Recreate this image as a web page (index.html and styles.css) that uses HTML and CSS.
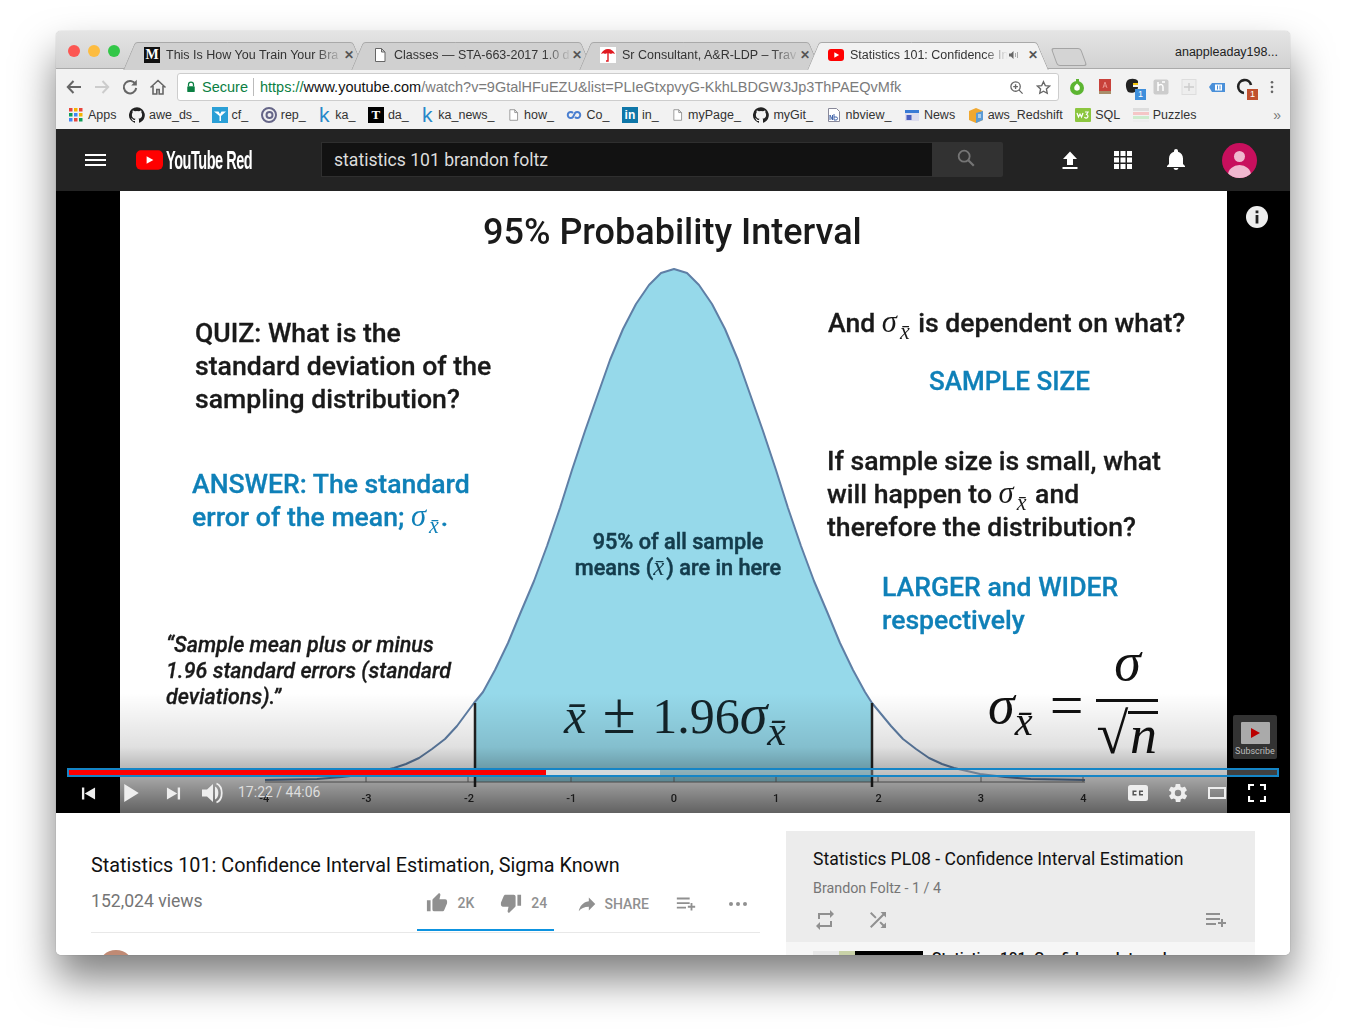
FILE: index.html
```html
<!DOCTYPE html>
<html lang="en">
  <head>
    <meta charset="UTF-8" />
    <meta name="viewport" content="width=device-width, initial-scale=1.0" />
    <title>Statistics 101: Confidence Interval Estimation, Sigma Known</title>
    <link rel="stylesheet" href="styles.css">
  </head>
  <body>
    <div class="window">
      <!-- browser tabs -->
      <div class="tabstrip">
        <div class="lights"><i class="red"></i><i class="yellow"></i><i class="green"></i></div>
        <div class="tabs">
          <div class="tab">
            <span class="fav fav-m">M</span>
            <span class="tab-title">This Is How You Train Your Bra</span>
            <span class="tab-x">✕</span>
          </div>
          <div class="tab">
            <svg class="fav" viewBox="0 0 16 16"><path d="M3.5 1.5h6l3.5 3.5v9.5h-9.5zM9.5 1.5v3.5h3.5" fill="#fff" stroke="#666"/></svg>
            <span class="tab-title">Classes — STA-663-2017 1.0 d</span>
            <span class="tab-x">✕</span>
          </div>
          <div class="tab">
            <svg class="fav" viewBox="0 0 16 16"><rect width="16" height="16" fill="#fff"/><path d="M1 7c1-3 4-5 7-5s6 2 7 5c-2-1-3-1-4 0-1-1-5-1-6 0-1-1-2-1-4 0z" fill="#e01b22"/><path d="M8 6v8H6" fill="none" stroke="#e01b22" stroke-width="1.4"/></svg>
            <span class="tab-title">Sr Consultant, A&amp;R-LDP – Trav</span>
            <span class="tab-x">✕</span>
          </div>
          <div class="tab tab-active">
            <svg class="fav" viewBox="0 0 16 16"><rect y="2" width="16" height="12" rx="3" fill="#f00"/><path d="M6.3 5.2v5.6l4.800-2.800z" fill="#fff"/></svg>
            <span class="tab-title">Statistics 101: Confidence In</span>
            <svg class="tab-sound" viewBox="0 0 12 12"><path d="M1 4.5h2l2.5-2.5v8L3 7.5H1z" fill="#666"/><path d="M7.500 4v4M9.500 3v6" stroke="#aaa"/></svg>
            <span class="tab-x">✕</span>
          </div>
          <div class="newtab"></div>
        </div>
        <div class="profile">anappleaday198...</div>
      </div>

      <!-- address bar -->
      <div class="toolbar">
        <svg class="nav" viewBox="0 0 18 18"><path d="M16 9H3M8.5 3 2.8 9l5.7 6" fill="none" stroke="#666" stroke-width="2"/></svg>
        <svg class="nav" viewBox="0 0 18 18"><path d="M2 9h13M9.5 3l5.7 6-5.7 6" fill="none" stroke="#ccc" stroke-width="2"/></svg>
        <svg class="nav" viewBox="0 0 18 18"><path d="M14.5 6.2A6.2 6.2 0 1 0 15.2 10" fill="none" stroke="#666" stroke-width="2"/><path d="M15.8 1.8v5.6h-5.6z" fill="#666"/></svg>
        <svg class="nav" viewBox="0 0 18 18"><path d="M1.5 9.5 9 2.500l7.500 7M4 8v8h3.800v-4.500h2.400V16H14V8" fill="none" stroke="#666" stroke-width="1.6"/></svg>
        <div class="omnibox">
          <svg class="lock" viewBox="0 0 12 14"><path d="M3 6V4a3 3 0 0 1 6 0v2" fill="none" stroke="#0b8043" stroke-width="1.5"/><rect x="1.5" y="6" width="9" height="7" rx="1" fill="#0b8043"/></svg>
          <span class="secure">Secure</span>
          <span class="url"><span class="url-scheme">https://</span><span class="url-host">www.youtube.com</span>/watch?v=9GtalHFuEZU&amp;list=PLIeGtxpvyG-KkhLBDGW3Jp3ThPAEQvMfk</span>
          <svg class="omni-icon" viewBox="0 0 16 16"><circle cx="7" cy="7" r="5" fill="none" stroke="#666" stroke-width="1.4"/><path d="m10.5 10.5 4 4M4.500 7h5M7 4.500v5" stroke="#666" stroke-width="1.4"/></svg>
          <svg class="omni-icon" viewBox="0 0 16 16"><path d="m8 1.800 1.900 4.200 4.600.5-3.400 3.100.9 4.600L8 11.900l-4 2.300.9-4.600-3.400-3.100 4.600-.5z" fill="none" stroke="#666" stroke-width="1.4"/></svg>
        </div>
        <div class="exts">
          <svg viewBox="0 0 18 18"><circle cx="9" cy="10" r="7" fill="#5cb531"/><path d="M9 5.500c2.500 2 3.500 3.500 2.500 6-1 1.500-4 1.500-5 0-1-2.500.5-4 2.500-6z" fill="#fff"/><path d="M8 1h3v3H8z" fill="#5cb531"/></svg>
          <svg viewBox="0 0 18 18"><path d="M3 1h12v15H3z" fill="#c8413a"/><path d="M3 13h12v3H3z" fill="#a98e6a"/><path d="M7 10l2-6 2 6M7.800 8h2.400" fill="none" stroke="#e8928c"/></svg>
          <span class="ext-badge-wrap">
            <svg viewBox="0 0 18 18"><path d="M3 3c2-3 9-3 11 0v3H9v3h5c0 5-6 7-10 5-2-3-3-8-1-11z" fill="#222"/><path d="M9 5h5v2H9z" fill="#f1c40f"/></svg>
            <b class="ext-badge blue">1</b>
          </span>
          <svg viewBox="0 0 18 18"><rect x="1.5" y="1.5" width="15" height="15" rx="2" fill="#ccc"/><path d="M6 4v9M6 8c3-3 5-1 5 1v4M10 4h3" fill="none" stroke="#fff" stroke-width="1.5"/></svg>
          <svg viewBox="0 0 18 18"><rect x="2" y="1.5" width="14" height="15" fill="#eee" stroke="#ddd"/><path d="M4 9h10M9 5v8" stroke="#ccc" stroke-width="1.5"/></svg>
          <svg viewBox="0 0 18 18"><path d="M1 9l3-4h13v9H4z" fill="#4a90d9"/><rect x="7" y="6.5" width="7" height="6" fill="#fff"/><path d="M9.500 7.500v4M12 7.500v4" stroke="#4a90d9"/></svg>
          <span class="ext-badge-wrap">
            <svg viewBox="0 0 18 18"><path d="M15 7a6.500 6.500 0 1 0-7 8" fill="none" stroke="#222" stroke-width="2.6"/></svg>
            <b class="ext-badge brown">1</b>
          </span>
          <svg class="dots" viewBox="0 0 4 16"><circle cx="2" cy="2.5" r="1.5" fill="#666"/><circle cx="2" cy="8" r="1.5" fill="#666"/><circle cx="2" cy="13.5" r="1.5" fill="#666"/></svg>
        </div>
      </div>

      <!-- bookmarks -->
      <div class="bookmarks">
        <a><svg viewBox="0 0 16 16"><rect x="1" y="1" width="3.5" height="3.5" fill="#e8453c"/><rect x="6" y="1" width="3.5" height="3.5" fill="#f4b400"/><rect x="11" y="1" width="3.5" height="3.5" fill="#e8453c"/><rect x="1" y="6" width="3.5" height="3.5" fill="#0f9d58"/><rect x="6" y="6" width="3.5" height="3.5" fill="#4285f4"/><rect x="11" y="6" width="3.5" height="3.5" fill="#f4b400"/><rect x="1" y="11" width="3.5" height="3.5" fill="#4285f4"/><rect x="6" y="11" width="3.5" height="3.5" fill="#e8453c"/><rect x="11" y="11" width="3.5" height="3.5" fill="#0f9d58"/></svg>Apps</a>
        <a><svg viewBox="0 0 16 16"><path d="M8 .2a8 8 0 0 0-2.500 15.600c.4.100.5-.2.500-.4v-1.400c-2.200.5-2.700-1-2.700-1-.4-.9-.9-1.200-.9-1.200-.7-.5.100-.5.100-.5.800.100 1.200.8 1.200.8.700 1.200 1.900.9 2.300.7.100-.5.300-.9.500-1.100-1.800-.2-3.600-.9-3.600-4 0-.9.300-1.600.8-2.100-.1-.2-.4-1 .1-2.100 0 0 .7-.2 2.200.8a7.600 7.600 0 0 1 4 0c1.500-1 2.200-.8 2.200-.8.400 1.100.2 1.900.1 2.100.5.600.8 1.300.8 2.100 0 3.100-1.900 3.700-3.600 3.900.3.200.5.700.5 1.500v2.200c0 .2.100.5.600.4A8 8 0 0 0 8 .2z" fill="#222"/></svg>awe_ds_</a>
        <a><svg viewBox="0 0 16 16"><rect width="16" height="16" fill="#2a9fd6"/><path d="M2 4.500h4.500L8 7l1.500-2.500H14L9 9v5H7.500V9z" fill="#fff"/></svg>cf_</a>
        <a><svg viewBox="0 0 16 16"><circle cx="8" cy="8" r="7" fill="none" stroke="#668" stroke-width="2"/><circle cx="8.5" cy="8" r="3" fill="none" stroke="#668" stroke-width="2"/></svg>rep_</a>
        <a><span class="bm-k">k</span>ka_</a>
        <a><span class="fav-t">T</span>da_</a>
        <a><span class="bm-k">k</span>ka_news_</a>
        <a><svg class="bm-doc" viewBox="0 0 16 16"><path d="M3.5 1.5h6l3.5 3.5v9.5h-9.5zM9.5 1.5v3.5h3.5" fill="#fff" stroke="#888"/></svg>how_</a>
        <a><svg viewBox="0 0 16 16"><path d="M7 6a3 3 0 1 0 0 4l2-4a3 3 0 1 1 0 4" fill="none" stroke="#4a7fd0" stroke-width="2"/></svg>Co_</a>
        <a><span class="fav-in">in</span>in_</a>
        <a><svg class="bm-doc" viewBox="0 0 16 16"><path d="M3.5 1.5h6l3.5 3.5v9.5h-9.5zM9.5 1.5v3.5h3.5" fill="#fff" stroke="#888"/></svg>myPage_</a>
        <a><svg viewBox="0 0 16 16"><path d="M8 .2a8 8 0 0 0-2.500 15.600c.4.100.5-.2.500-.4v-1.400c-2.200.5-2.700-1-2.700-1-.4-.9-.9-1.200-.9-1.200-.7-.5.100-.5.100-.5.800.100 1.200.8 1.200.8.700 1.200 1.900.9 2.300.7.100-.5.300-.9.500-1.100-1.800-.2-3.600-.9-3.600-4 0-.9.300-1.600.8-2.100-.1-.2-.4-1 .1-2.100 0 0 .7-.2 2.200.8a7.600 7.600 0 0 1 4 0c1.500-1 2.200-.8 2.200-.8.400 1.100.2 1.900.1 2.100.5.600.8 1.300.8 2.100 0 3.100-1.900 3.700-3.600 3.900.3.200.5.700.5 1.500v2.200c0 .2.100.5.600.4A8 8 0 0 0 8 .2z" fill="#222"/></svg>myGit_</a>
        <a><svg viewBox="0 0 16 16"><path d="M2.500 1.500h8l3 3v10h-11z" fill="#fff" stroke="#889"/><path d="M4 13V8l2.500 5V8M8 7v6h2a1.500 1.500 0 0 0 0-3H8" fill="none" stroke="#46a"/></svg>nbview_</a>
        <a><svg viewBox="0 0 16 16"><rect x="1" y="3" width="14" height="11" fill="#dde"/><rect x="1" y="3" width="14" height="3" fill="#3a7bd5"/><rect x="2.5" y="8" width="5" height="5" fill="#4a5fc0"/></svg>News</a>
        <a><svg viewBox="0 0 16 16"><path d="M1 4l7-3 7 3v9l-7 3-7-3z" fill="#f0a830"/><path d="M8 6v10l7-3V4z" fill="#5b9bd5"/><path d="M10 8h3M10 10h3" stroke="#fff"/></svg>aws_Redshift</a>
        <a><svg viewBox="0 0 16 16"><rect y="1" width="16" height="14" rx="1" fill="#8cc63f"/><path d="M2 6l1.500 4L5 7l1.500 3L8 6M10 5h3l-1.500 2.500a1.800 1.800 0 1 1-2 2.500" fill="none" stroke="#fff" stroke-width="1.2"/></svg>SQL</a>
        <a><svg viewBox="0 0 16 16"><rect y="1" width="16" height="3" fill="#ddd"/><rect y="5" width="16" height="3" fill="#f5c6c6"/><rect y="9" width="16" height="3" fill="#cdeccd"/><rect y="13" width="16" height="2" fill="#eee"/></svg>Puzzles</a>
        <span class="bm-more">»</span>
      </div>

      <!-- youtube header -->
      <header class="masthead">
        <div class="burger"><i></i><i></i><i></i></div>
        <div class="logo">
          <svg viewBox="0 0 28 20"><rect width="28" height="20" rx="5" fill="#f00"/><path d="M11 6v8l7-4z" fill="#fff"/></svg>
          <span class="logo-text">YouTube Red</span>
        </div>
        <div class="search">
          <div class="search-input">statistics 101 brandon foltz</div>
          <div class="search-btn">
            <svg viewBox="0 0 24 24"><circle cx="10" cy="10" r="6" fill="none" stroke="#757575" stroke-width="2"/><path d="m14.500 14.500 6 6" stroke="#757575" stroke-width="2.4"/></svg>
          </div>
        </div>
        <div class="head-icons">
          <svg viewBox="0 0 24 24"><path d="M12 3.500 19 11h-4v6H9v-6H5zM4.500 19h15v2h-15z" fill="#fff"/></svg>
          <svg viewBox="0 0 24 24"><path d="M3 3h5v5H3zM9.500 3h5v5h-5zM16 3h5v5h-5zM3 9.500h5v5H3zM9.500 9.500h5v5h-5zM16 9.500h5v5h-5zM3 16h5v5H3zM9.500 16h5v5h-5zM16 16h5v5h-5z" fill="#fff"/></svg>
          <svg viewBox="0 0 24 24"><path d="M12 22a2.500 2.500 0 0 0 2.500-2h-5A2.500 2.500 0 0 0 12 22zM19 16v-5.500c0-3.400-1.800-6-5-6.800V3a2 2 0 0 0-4 0v.7c-3.200.8-5 3.400-5 6.800V16l-2 2v1h18v-1z" fill="#fff"/></svg>
        </div>
        <div class="avatar"><i class="avatar-head"></i><i class="avatar-body"></i></div>
      </header>

      <!-- player -->
      <section class="player">
        <div class="slide">
          <svg class="curve" viewBox="0 0 1107 622">
            <path class="bell-fill" d="M354 512 L363 501 L375 479 L388 452 L400 423 L414 390 L427 355 L440 317 L452 279 L465 240 L478 203 L490 169 L503 138 L516 113 L529 94 L541 82 L554 78 L567 82 L579 94 L592 113 L605 138 L618 169 L630 203 L643 240 L656 279 L668 317 L681 355 L694 390 L708 423 L720 452 L733 479 L745 501 L752 512 L752 591 L354 591 Z"/>
            <path class="bell-line" d="M145 589 L197 588 L222 586 L248 583 L274 577 L286 573 L299 567 L312 558 L325 548 L337 535 L354 512 L363 501 L375 479 L388 452 L400 423 L414 390 L427 355 L440 317 L452 279 L465 240 L478 203 L490 169 L503 138 L516 113 L529 94 L541 82 L554 78 L567 82 L579 94 L592 113 L605 138 L618 169 L630 203 L643 240 L656 279 L668 317 L681 355 L694 390 L708 423 L720 452 L733 479 L745 501 L752 512 L771 535 L783 548 L796 558 L809 567 L822 573 L834 577 L860 583 L885 586 L911 588 L965 589"/>
            <path class="axis" d="M145 591H965M246 586v5M348 586v5M451 586v5M554 586v5M656 586v5M758 586v5M861 586v5M963 586v5"/>
            <path class="cut" d="M355 512V596M752 512V596"/>
          </svg>

          <h1 class="slide-title">95% Probability Interval</h1>
          <p class="note quiz">QUIZ: What is the<br>standard deviation of the<br>sampling distribution?</p>
          <p class="note note-blue answer">ANSWER: The standard<br>error of the mean; <span class="m">σ<sub>x̄</sub></span>.</p>
          <p class="note quote">“Sample mean plus or minus<br>1.96 standard errors (standard<br>deviations).”</p>
          <p class="note inner">95% of all sample<br>means (<span class="m">x̄</span>) are in here</p>
          <p class="note dep">And <span class="m">σ<sub>x̄</sub></span> is dependent on what?</p>
          <p class="note note-blue size">SAMPLE SIZE</p>
          <p class="note small">If sample size is small, what<br>will happen to <span class="m">σ<sub>x̄</sub></span> and<br>therefore the distribution?</p>
          <p class="note note-blue wider">LARGER and WIDER<br>respectively</p>
          <div class="formula1"><em>x̄</em> <span class="pm">±</span> 1.96<em class="f1-sigma">σ<sub>x̄</sub></em></div>
          <div class="formula2">
            <em class="f2-left">σ<sub>x̄</sub></em>
            <span class="f2-eq">=</span>
            <span class="frac"><em class="num">σ</em><span class="den"><span class="root">√</span><em class="rad">n</em></span></span>
          </div>
          <div class="ticks">
            <span>-4</span><span>-3</span><span>-2</span><span>-1</span><span>0</span><span>1</span><span>2</span><span>3</span><span>4</span>
          </div>
        </div>

        <div class="shade"></div>

        <svg class="info" viewBox="0 0 22 22"><circle cx="11" cy="11" r="11" fill="#eee"/><path d="M9.600 4.500h2.800v2.800H9.600zM9.600 9h2.800v8.500H9.600z" fill="#222"/></svg>

        <div class="watermark">
          <div class="wm-tile"><i></i></div>
          <span>Subscribe</span>
        </div>

        <div class="progress">
          <div class="progress-track">
            <div class="progress-buffer" style="width: 48.9%"></div>
            <div class="progress-played" style="width: 39.5%"></div>
          </div>
        </div>

        <div class="controls">
          <svg class="c-prev" viewBox="0 0 16 16"><path d="M1 1.500h2.500v13H1zM15 1.500v13L4 8z" fill="#eee"/></svg>
          <svg class="c-play" viewBox="0 0 18 22"><path d="M1 1v20l16-10z" fill="#eee"/></svg>
          <svg class="c-next" viewBox="0 0 16 16"><path d="M1 1.500v13L12 8zM12.500 1.500H15v13h-2.500z" fill="#eee"/></svg>
          <svg class="c-vol" viewBox="0 0 22 22"><path d="M1 7.500h5L12 2v18l-6-5.500H1z" fill="#eee"/><path d="M14 4.500c4.500 2 4.500 11 0 13z" fill="#eee"/><path d="M15.500 1.500c7 3 7 16 0 19" fill="none" stroke="#eee" stroke-width="1.8"/></svg>
          <span class="c-time">17:22 / 44:06</span>
          <span class="c-gap"></span>
          <svg class="c-cc" viewBox="0 0 20 16"><rect width="20" height="16" rx="2.5" fill="#eee"/><path d="M8.500 6.300H5.200v3.400h3.300M15 6.300h-3.300v3.400H15" fill="none" stroke="#555" stroke-width="1.5"/></svg>
          <svg class="c-gear" viewBox="0 0 24 24"><path fill="#eee" d="M19.400 13a7.600 7.600 0 0 0 0-2l2.100-1.600a.5.500 0 0 0 .1-.6l-2-3.500a.5.500 0 0 0-.6-.2l-2.500 1a7.300 7.300 0 0 0-1.700-1l-.4-2.600a.5.500 0 0 0-.5-.4h-4a.5.500 0 0 0-.5.400l-.4 2.600a7.700 7.700 0 0 0-1.700 1l-2.500-1a.5.500 0 0 0-.6.200l-2 3.500a.5.500 0 0 0 .1.600L4.600 11a7.600 7.600 0 0 0 0 2l-2.100 1.600a.5.500 0 0 0-.1.600l2 3.500c.1.200.4.300.6.200l2.500-1a7.300 7.300 0 0 0 1.700 1l.4 2.600c0 .2.200.4.500.4h4c.3 0 .5-.2.500-.4l.4-2.600a7.700 7.700 0 0 0 1.700-1l2.500 1c.2.100.5 0 .6-.2l2-3.500a.5.500 0 0 0-.1-.6zM12 15.500a3.500 3.500 0 1 1 0-7 3.500 3.500 0 0 1 0 7z"/></svg>
          <svg class="c-theater" viewBox="0 0 18 12"><path d="M1 1h16v10H1z" fill="none" stroke="#eee" stroke-width="2"/></svg>
          <svg class="c-full" viewBox="0 0 18 18"><path d="M1 6V1h5M12 1h5v5M17 12v5h-5M6 17H1v-5" fill="none" stroke="#fff" stroke-width="2.2"/></svg>
        </div>
      </section>

      <!-- below the video -->
      <section class="below">
        <div class="info-col">
          <h2 class="video-title">Statistics 101: Confidence Interval Estimation, Sigma Known</h2>
          <div class="meta">
            <span class="views">152,024 views</span>
            <div class="actions">
              <div class="rating">
                <svg viewBox="0 0 24 24"><path fill="#909090" d="M1 21h4V9H1zM23 10a2 2 0 0 0-2-2h-6.300l1-4.600v-.3c0-.4-.2-.8-.4-1.100L14.200 1 7.600 7.600C7.200 8 7 8.500 7 9v10a2 2 0 0 0 2 2h9c.8 0 1.500-.5 1.800-1.200l3-7.100c.1-.2.200-.5.200-.7z"/></svg>
                <span class="count">2K</span>
                <svg viewBox="0 0 24 24"><path fill="#909090" d="M15 3H6c-.8 0-1.500.5-1.800 1.200l-3 7.100c-.1.200-.2.500-.2.700v2a2 2 0 0 0 2 2h6.300l-1 4.600v.3c0 .4.200.8.400 1.100L9.800 23l6.600-6.600c.4-.4.600-.9.600-1.400V5a2 2 0 0 0-2-2zM19 3v12h4V3z"/></svg>
                <span class="count">24</span>
              </div>
              <svg class="act-share" viewBox="0 0 24 24"><path fill="#909090" d="M14 9V5l7 7-7 7v-4.100c-5 0-8.500 1.600-11 5.100 1-5 4-10 11-11z"/></svg>
              <span class="count share-label">SHARE</span>
              <svg class="act-add" viewBox="0 0 24 24"><path fill="#909090" d="M2 5h14v2H2zM2 10h14v2H2zM2 15h10v2H2zM17 14v-3h2v3h3v2h-3v3h-2v-3h-3v-2z"/></svg>
              <svg class="act-more" viewBox="0 0 20 6"><circle cx="3" cy="3" r="2" fill="#909090"/><circle cx="10" cy="3" r="2" fill="#909090"/><circle cx="17" cy="3" r="2" fill="#909090"/></svg>
            </div>
          </div>
          <div class="channel-avatar"></div>
        </div>

        <aside class="playlist">
          <div class="pl-head">
            <h3 class="pl-title">Statistics PL08 - Confidence Interval Estimation</h3>
            <div class="pl-sub">Brandon Foltz - 1 / 4</div>
            <div class="pl-icons">
              <svg viewBox="0 0 24 24"><path fill="#909090" d="M7 7h10v3l4-4-4-4v3H5v6h2zM17 17H7v-3l-4 4 4 4v-3h12v-6h-2z"/></svg>
              <svg viewBox="0 0 24 24"><path fill="#909090" d="M10.600 9.200 5.400 4 4 5.400l5.200 5.200zM14.500 4l2 2L4 18.600 5.400 20 18 7.500l2 2V4zM14.800 13.400l-1.400 1.400 3.100 3.100L14.500 20H20v-5.500l-2 2z"/></svg>
              <span class="c-gap"></span>
              <svg viewBox="0 0 24 24"><path fill="#909090" d="M2 5h14v2H2zM2 10h14v2H2zM2 15h10v2H2zM17 14v-3h2v3h3v2h-3v3h-2v-3h-3v-2z"/></svg>
            </div>
          </div>
          <div class="pl-row">
            <div class="pl-thumb"><i></i></div>
            <div class="pl-item">Statistics 101: Confidence Interval</div>
          </div>
        </aside>
      </section>
    </div>
  </body>
</html>
```

FILE: styles.css
```css
* {
  box-sizing: border-box;
}

html,
body {
  margin: 0;
  height: 1035px;
  overflow: hidden;
  background: #fff;
}

body {
  padding: 31px 56px 0;
  font-family: "Liberation Sans", Arial, sans-serif;
}

i {
  font-style: normal;
}

.window {
  width: 1234px;
  height: 924px;
  border-radius: 5px;
  overflow: hidden;
  background: #fff;
  box-shadow: 0 24px 42px rgba(0, 0, 0, 0.5), 0 0 1px rgba(0, 0, 0, 0.4);
}

/* tab strip */
.tabstrip {
  display: flex;
  height: 38px;
  background: linear-gradient(#e4e4e4, #d2d2d2);
  border-bottom: 1px solid #aaa;
}

.lights {
  display: flex;
  gap: 8px;
  padding: 14px 0 0 12px;
  width: 74px;
}

.lights i {
  width: 12px;
  height: 12px;
  border-radius: 50%;
}

.lights .red {
  background: #fc5753;
}

.lights .yellow {
  background: #fdbc40;
}

.lights .green {
  background: #33c748;
}

.tabs {
  display: flex;
  align-items: flex-end;
  height: 38px;
  width: 1045px;
  isolation: isolate;
}

.tab {
  position: relative;
  display: flex;
  align-items: center;
  flex: none;
  width: 228px;
  height: 28px;
  padding: 0 4px 2px 14px;
  font-size: 12.5px;
  color: #333;
  margin-bottom: -1px;
  z-index: 1;
}

.tab::before,
.tab::after {
  content: "";
  position: absolute;
  top: 0;
  bottom: 0;
  width: 55%;
  background: #d0d0d0;
  border-top: 1px solid #a9a9a9;
  z-index: -1;
}

.tab::before {
  left: -1px;
  border-left: 1px solid #a9a9a9;
  border-top-left-radius: 3px;
  transform: skewX(-23deg);
}

.tab::after {
  right: -1px;
  border-right: 1px solid #a9a9a9;
  border-top-right-radius: 3px;
  transform: skewX(23deg);
}

.tab-active {
  z-index: 2;
}

.tab-active::before,
.tab-active::after {
  background: #f2f2f2;
}

.fav {
  flex: none;
  width: 16px;
  height: 16px;
}

.fav-m {
  background: #111;
  color: #fff;
  font: bold 14px/16px "Liberation Serif", serif;
  text-align: center;
}

.tab-title {
  flex: 1;
  margin-left: 6px;
  white-space: nowrap;
  -webkit-mask-image: linear-gradient(to right, #000 84%, transparent 100%);
  mask-image: linear-gradient(to right, #000 84%, transparent 100%);
}

.tab-sound {
  flex: none;
  width: 12px;
  height: 12px;
  margin-right: 8px;
}

.tab-x {
  flex: none;
  width: 13px;
  margin-right: -3px;
  font-size: 12px;
  font-weight: bold;
  color: #555;
}

.newtab {
  width: 30px;
  height: 18px;
  margin: 0 0 3px 12px;
  background: #d4d4d4;
  border: 1px solid #a4a4a4;
  border-radius: 3px;
  transform: skewX(20deg);
}

.profile {
  flex: 1;
  padding-top: 14px;
  font-size: 12.5px;
  color: #222;
  white-space: nowrap;
}

/* address bar */
.toolbar {
  display: flex;
  align-items: center;
  height: 33px;
  padding: 3px 0 0 9px;
  background: #f2f2f2;
}

.nav {
  flex: none;
  width: 18px;
  height: 18px;
  margin-right: 10px;
}

.omnibox {
  display: flex;
  align-items: center;
  flex: none;
  width: 882px;
  height: 28px;
  padding: 0 7px 0 8px;
  background: #fff;
  border: 1px solid #cdcdcd;
  border-radius: 3px;
  font-size: 14.5px;
}

.lock {
  width: 10px;
  height: 12px;
  margin-right: 6px;
}

.secure {
  color: #0b8043;
  padding-right: 5px;
  border-right: 1px solid #bbb;
  line-height: 18px;
}

.url {
  flex: 1;
  padding-left: 6px;
  color: #7b7b7b;
  white-space: nowrap;
}

.url-scheme {
  color: #0b8043;
}

.url-host {
  color: #111;
}

.omni-icon {
  width: 15px;
  height: 15px;
  margin-left: 12px;
}

.exts {
  display: flex;
  align-items: center;
  gap: 10px;
  padding-left: 9px;
}

.exts svg {
  flex: none;
  width: 18px;
  height: 18px;
}

.exts .dots {
  width: 4px;
  height: 14px;
  margin-left: 6px;
}

.ext-badge-wrap {
  position: relative;
  display: flex;
}

.ext-badge {
  position: absolute;
  right: -4px;
  bottom: -4px;
  width: 11px;
  height: 11px;
  font-size: 9px;
  line-height: 11px;
  text-align: center;
  color: #fff;
  font-weight: normal;
}

.ext-badge.blue {
  background: #3f8fdc;
}

.ext-badge.brown {
  background: #c0502e;
}

/* bookmarks */
.bookmarks {
  display: flex;
  align-items: center;
  gap: 12.5px;
  height: 27px;
  padding: 0 0 2px 12px;
  background: #f2f2f2;
  font-size: 12.5px;
  color: #333;
  white-space: nowrap;
}

.bookmarks a {
  display: flex;
  align-items: center;
  gap: 4px;
}

.bookmarks svg {
  flex: none;
  width: 16px;
  height: 16px;
}

.bookmarks .bm-doc {
  width: 13px;
}

.bm-k {
  width: 12px;
  margin-right: 1px;
  font-size: 21px;
  line-height: 16px;
  color: #2688c9;
  text-align: center;
}

.fav-t {
  width: 16px;
  height: 16px;
  background: #000;
  color: #fff;
  font: bold 13px/16px "Liberation Serif", serif;
  text-align: center;
}

.fav-in {
  width: 16px;
  height: 16px;
  background: #0e76a8;
  color: #fff;
  font: bold 12px/16px "Liberation Sans", sans-serif;
  text-align: center;
}

.bm-more {
  margin-left: auto;
  padding-right: 9px;
  font-size: 14px;
  color: #777;
}

/* youtube header */
.masthead {
  display: flex;
  align-items: center;
  height: 62px;
  padding-left: 29px;
  background: #232323;
}

.burger {
  display: flex;
  flex-direction: column;
  gap: 3px;
  width: 21px;
}

.burger i {
  height: 2px;
  background: #fff;
}

.logo {
  display: flex;
  align-items: center;
  width: 215px;
  padding-left: 30px;
}

.logo svg {
  flex: none;
  width: 27px;
  height: 20px;
}

.logo-text {
  margin-left: 3px;
  font: bold 25px/1 "Liberation Sans", sans-serif;
  letter-spacing: -0.8px;
  color: #fff;
  white-space: nowrap;
  transform: scaleX(0.58);
  transform-origin: left center;
}

.search {
  display: flex;
  width: 682px;
  height: 35px;
  margin-top: -1px;
}

.search-input {
  flex: 1;
  padding-left: 12px;
  background: #121212;
  border: 1px solid #2f2f2f;
  border-right: none;
  font: 17.6px/35px Roboto, sans-serif;
  color: #ddd;
}

.search-btn {
  display: flex;
  align-items: center;
  justify-content: center;
  width: 71px;
  padding: 0 4px 3px 0;
  background: #323232;
  border-radius: 0 2px 2px 0;
}

.search-btn svg {
  width: 22px;
  height: 22px;
}

.head-icons {
  display: flex;
  gap: 29px;
  padding-left: 55px;
}

.head-icons svg {
  width: 24px;
  height: 24px;
}

.avatar {
  position: relative;
  width: 35px;
  height: 35px;
  margin-left: 34px;
  border-radius: 50%;
  background: #c80f5d;
  overflow: hidden;
}

.avatar-head,
.avatar-body {
  position: absolute;
  background: #f0b8cf;
  border-radius: 50%;
}

.avatar-head {
  left: 12px;
  top: 8px;
  width: 11px;
  height: 11px;
}

.avatar-body {
  left: 6px;
  top: 22px;
  width: 23px;
  height: 20px;
}

/* player */
.player {
  position: relative;
  height: 622px;
  background: #000;
  overflow: hidden;
}

.slide {
  position: absolute;
  left: 64px;
  top: 0;
  width: 1107px;
  height: 622px;
  background: #fff;
  color: #1a1a1a;
  font-family: Roboto, sans-serif;
  font-weight: 500;
  filter: blur(0.45px);
}

.curve {
  position: absolute;
  left: 0;
  top: 0;
  width: 1107px;
  height: 622px;
}

.bell-fill {
  fill: #96d9ea;
}

.bell-line {
  fill: none;
  stroke: #5f7fa6;
  stroke-width: 2;
  stroke-linejoin: round;
}

.axis {
  fill: none;
  stroke: #777;
  stroke-width: 1;
}

.cut {
  fill: none;
  stroke: #222;
  stroke-width: 2.5;
}

.slide-title {
  position: absolute;
  left: 363px;
  top: 20px;
  margin: 0;
  font-size: 36px;
  line-height: 42px;
  font-weight: 500;
  white-space: nowrap;
}

.note {
  position: absolute;
  margin: 0;
  font-size: 26.6px;
  line-height: 33px;
  white-space: nowrap;
  -webkit-text-stroke: 0.3px;
}

.note-blue {
  color: #0f80b8;
}

.m {
  font-family: "Liberation Serif", serif;
  font-style: italic;
  font-weight: normal;
  font-size: 1.15em;
  line-height: 0;
  letter-spacing: 2px;
  -webkit-text-stroke: 0;
}

.m sub {
  font-size: 0.72em;
  line-height: 0;
  margin-left: 1px;
}

.quiz {
  left: 75px;
  top: 125px;
}

.answer {
  left: 72px;
  top: 276px;
}

.quote {
  left: 46px;
  top: 441px;
  font-size: 21.5px;
  line-height: 26px;
  font-style: italic;
}

.inner {
  left: 448px;
  top: 338px;
  width: 220px;
  font-size: 21.7px;
  line-height: 26px;
  text-align: center;
  color: #143c4c;
  -webkit-text-stroke: 0.5px;
}

.dep {
  left: 708px;
  top: 115px;
}

.size {
  left: 809px;
  top: 174px;
  font-size: 26px;
}

.small {
  left: 707px;
  top: 253px;
}

.wider {
  left: 762px;
  top: 379px;
}

.formula1 {
  position: absolute;
  left: 444px;
  top: 495px;
  font: 50px/60px "Liberation Serif", serif;
  white-space: nowrap;
  color: #14252b;
}

.f1-sigma {
  font-size: 56px;
  line-height: 0;
}

.formula1 sub,
.f2-left sub {
  font-size: 0.75em;
  line-height: 0;
}

.pm {
  margin: 0 4px;
  font-size: 60px;
  line-height: 0;
}

.formula2 {
  position: absolute;
  left: 868px;
  top: 458px;
  display: flex;
  align-items: center;
  font: 54px/50px "Liberation Serif", serif;
  color: #111;
}

.f2-eq {
  margin: 0 13px 0 17px;
  font-size: 60px;
}

.frac {
  display: flex;
  flex-direction: column;
  align-items: center;
  width: 62px;
}

.num {
  width: 100%;
  height: 53px;
  padding-bottom: 24px;
  line-height: 26px;
  border-bottom: 3px solid #111;
  text-align: center;
}

.den {
  display: flex;
  justify-content: flex-end;
  width: 100%;
  height: 58px;
  padding-top: 7px;
}

.root {
  font-size: 58px;
  line-height: 50px;
}

.rad {
  flex: 1;
  height: 40px;
  line-height: 42px;
  border-top: 3px solid #111;
  margin-top: 2px;
  text-align: center;
}

.ticks {
  position: absolute;
  left: 93px;
  top: 601px;
  display: flex;
  font-size: 11px;
  font-weight: 500;
  color: #333;
}

.ticks span {
  width: 102.4px;
  text-align: center;
}

.shade {
  position: absolute;
  left: 0;
  right: 0;
  bottom: 0;
  height: 120px;
  background: linear-gradient(rgba(0, 0, 0, 0), rgba(0, 0, 0, 0.12) 45%, rgba(0, 0, 0, 0.62));
}

.info {
  position: absolute;
  right: 22px;
  top: 15px;
  width: 22px;
  height: 22px;
}

.watermark {
  position: absolute;
  left: 1177px;
  top: 524px;
  width: 44px;
  height: 44px;
  padding-top: 7px;
  background: #333;
  border-radius: 2px;
  text-align: center;
  font: 9px/10px Roboto, sans-serif;
  color: #bbb;
}

.wm-tile {
  display: flex;
  align-items: center;
  justify-content: center;
  width: 29px;
  height: 22px;
  margin: 0 auto 2px;
  background: #aaa;
  border-radius: 1px;
}

.wm-tile i {
  border-left: 9px solid #b00;
  border-top: 5px solid transparent;
  border-bottom: 5px solid transparent;
}

.progress {
  position: absolute;
  left: 11px;
  top: 577px;
  width: 1212px;
  height: 9px;
  border: 2px solid #1585c6;
}

.progress-track {
  position: relative;
  height: 5px;
  background: rgba(255, 255, 255, 0.25);
}

.progress-buffer,
.progress-played {
  position: absolute;
  left: 0;
  top: 0;
  bottom: 0;
}

.progress-buffer {
  background: rgba(225, 225, 225, 0.85);
}

.progress-played {
  background: #f00;
}

.controls {
  position: absolute;
  left: 0;
  right: 0;
  bottom: 0;
  display: flex;
  align-items: center;
  height: 40px;
  padding: 0 24px 0 25px;
}

.controls svg {
  flex: none;
}

.c-prev {
  width: 15px;
  height: 15px;
}

.c-play {
  width: 17px;
  height: 20px;
  margin-left: 27px;
}

.c-next {
  width: 15px;
  height: 15px;
  margin-left: 26px;
}

.c-vol {
  width: 22px;
  height: 22px;
  margin-left: 20px;
}

.c-time {
  margin: -3px 0 0 15px;
  font: 14px Roboto, sans-serif;
  color: #ddd;
}

.c-gap {
  flex: 1;
}

.c-cc {
  width: 20px;
  height: 16px;
}

.c-gear {
  width: 22px;
  height: 22px;
  margin-left: 19px;
}

.c-theater {
  width: 18px;
  height: 12px;
  margin-left: 19px;
}

.c-full {
  width: 18px;
  height: 18px;
  margin-left: 22px;
}

/* below the video */
.below {
  display: flex;
  height: 142px;
  background: #fff;
}

.info-col {
  width: 704px;
  margin-right: 26px;
  padding: 40px 0 0 35px;
  font-family: Roboto, sans-serif;
}

.video-title {
  margin: 0;
  font-size: 19.8px;
  line-height: 26px;
  font-weight: 400;
  color: #111;
  white-space: nowrap;
}

.meta {
  display: flex;
  justify-content: space-between;
  height: 54px;
  padding-top: 11px;
  border-bottom: 1px solid #e8e8e8;
}

.views {
  font-size: 17.6px;
  line-height: 22px;
  color: #757575;
}

.actions {
  display: flex;
  align-items: center;
  height: 43px;
  margin-top: -11px;
  padding-top: 6px;
  padding-right: 12px;
}

.actions svg {
  width: 22px;
  height: 22px;
}

.rating {
  display: flex;
  align-items: flex-start;
  align-self: flex-start;
  gap: 9px;
  width: 137px;
  height: 53px;
  margin-top: -7px;
  padding: 14px 0 0 9px;
  border-bottom: 2px solid #0d93e0;
}

.rating .count {
  line-height: 22px;
}

.rating .count + svg {
  margin-left: 17px;
}

.count {
  font-size: 14px;
  font-weight: 500;
  color: #909090;
}

.act-share {
  margin-left: 22px;
}

.share-label {
  margin-left: 6px;
}

.actions .act-add {
  margin-left: 26px;
}

.actions .act-more {
  width: 20px;
  height: 6px;
  margin-left: 31px;
}

.channel-avatar {
  width: 36px;
  height: 36px;
  margin: 17px 0 0 7px;
  border-radius: 50%;
  background: #c08a74;
}

.playlist {
  width: 469px;
  margin-top: 18px;
  font-family: Roboto, sans-serif;
}

.pl-head {
  height: 111px;
  padding: 16px 27px 0;
  background: #ececec;
}

.pl-title {
  margin: 0;
  font-size: 17.6px;
  line-height: 24px;
  font-weight: 400;
  color: #111;
  white-space: nowrap;
}

.pl-sub {
  margin-top: 8px;
  font-size: 14.3px;
  line-height: 18px;
  color: #767676;
}

.pl-icons {
  display: flex;
  align-items: center;
  gap: 29px;
  margin-top: 11px;
}

.pl-icons svg {
  width: 24px;
  height: 24px;
}

.pl-row {
  display: flex;
  height: 40px;
  padding: 9px 0 0 27px;
  background: #f6f6f6;
}

.pl-thumb {
  display: flex;
  justify-content: flex-end;
  width: 110px;
  height: 30px;
  background: linear-gradient(90deg, #e8e8e8 24%, #c9d2a8 24%);
}

.pl-thumb i {
  width: 68px;
  background: #000;
}

.pl-item {
  margin: -1px 0 0 9px;
  font-size: 15.3px;
  font-weight: 500;
  line-height: 16px;
  color: #111;
}
```
